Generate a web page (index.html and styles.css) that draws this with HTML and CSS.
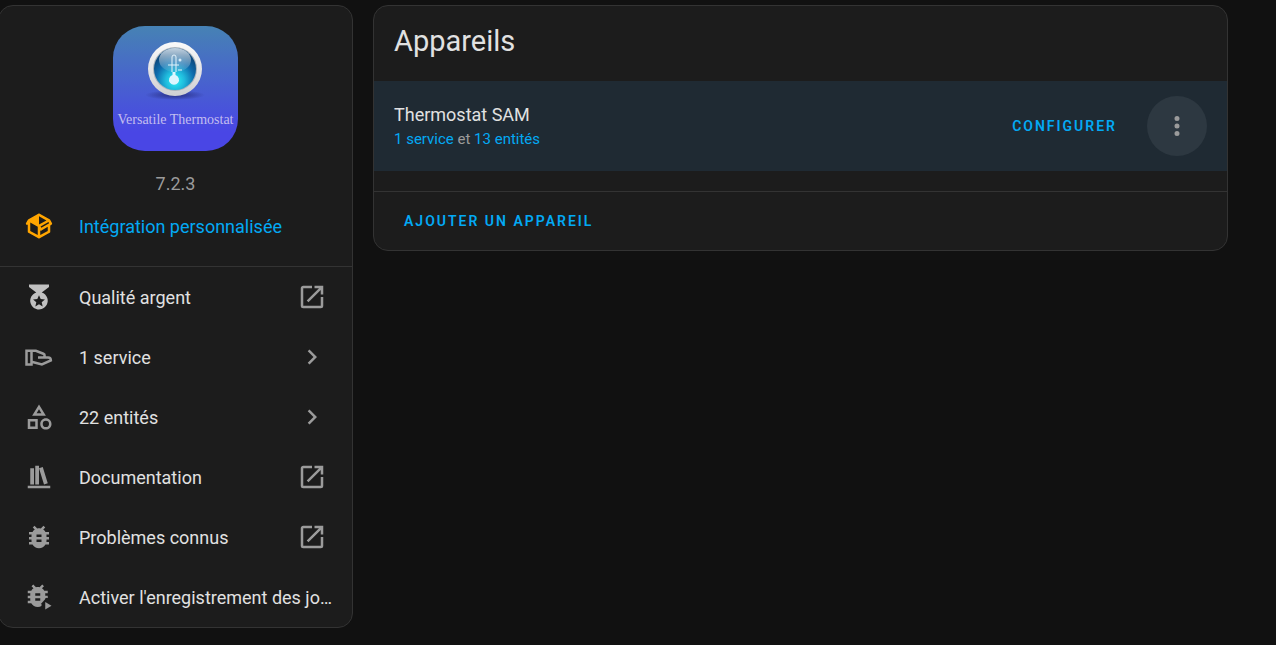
FILE: index.html
```html
<!DOCTYPE html>
<html lang="fr">
<head>
    <meta charset="UTF-8">
    <meta name="viewport" content="width=device-width, initial-scale=1.0">
    <title>Versatile Thermostat</title>
    <link rel="stylesheet" href="styles.css">
</head>
<body>
    <!-- Shared icons -->
    <svg class="sprite" aria-hidden="true">
        <symbol id="open" viewBox="0 0 24 24"><path d="M14,3V5H17.59L7.76,14.83L9.17,16.24L19,6.41V10H21V3M19,19H5V5H12V3H5C3.89,3 3,3.9 3,5V19A2,2 0 0,0 5,21H19A2,2 0 0,0 21,19V12H19V19Z"/></symbol>
        <symbol id="chevron" viewBox="0 0 24 24"><path d="M8.59,16.58L13.17,12L8.59,7.41L10,6L16,12L10,18L8.59,16.58Z"/></symbol>
        <symbol id="bug" viewBox="0 0 24 24"><path d="M14,12H10V10H14M14,16H10V14H14M20,8H17.19C16.74,7.22 16.12,6.55 15.37,6.04L17,4.41L15.59,3L13.42,5.17C12.96,5.06 12.5,5 12,5C11.5,5 11.04,5.06 10.59,5.17L8.41,3L7,4.41L8.62,6.04C7.88,6.55 7.26,7.22 6.81,8H4V10H6.09C6.04,10.33 6,10.66 6,11V12H4V14H6V15C6,15.34 6.04,15.67 6.09,16H4V18H6.81C7.85,19.79 9.78,21 12,21C14.22,21 16.15,19.79 17.19,18H20V16H17.91C17.96,15.67 18,15.34 18,15V14H20V12H18V11C18,10.66 17.96,10.33 17.91,10H20V8Z"/></symbol>
    </svg>

    <main class="page">
        <!-- Integration card -->
        <aside class="card overview">
            <div class="brand">
                <div class="logo">
                    <svg class="logo-dial" viewBox="0 0 60 60" aria-hidden="true">
                        <defs>
                            <linearGradient id="ring" x1="0" y1="0" x2="0" y2="1"><stop offset="0" stop-color="#fafafa"/><stop offset="1" stop-color="#cfcfd2"/></linearGradient>
                            <radialGradient id="glass" cx="0.5" cy="0.78" r="0.65"><stop offset="0" stop-color="#2ff3f5"/><stop offset="0.35" stop-color="#1fb9dc"/><stop offset="0.7" stop-color="#0e6cad"/><stop offset="1" stop-color="#0b4a80"/></radialGradient>
                            <linearGradient id="shine" x1="0" y1="0" x2="0" y2="1"><stop offset="0" stop-color="#fff" stop-opacity="0.75"/><stop offset="1" stop-color="#fff" stop-opacity="0.05"/></linearGradient>
                            <radialGradient id="shade"><stop offset="0" stop-color="#1b1c60" stop-opacity="0.7"/><stop offset="1" stop-color="#1b1c60" stop-opacity="0"/></radialGradient>
                        </defs>
                        <ellipse cx="29" cy="55" rx="30" ry="5" fill="url(#shade)"/>
                        <circle cx="29" cy="29" r="27" fill="url(#ring)"/>
                        <circle cx="29" cy="29" r="22" fill="#a9b4bd"/>
                        <circle cx="29" cy="29" r="21" fill="url(#glass)"/>
                        <ellipse cx="29" cy="20" rx="16" ry="12" fill="url(#shine)"/>
                        <path d="M26,32V17a2,2 0 0 1 4,0V32" fill="none" stroke="#e2f2fb" stroke-width="1"/>
                        <path d="M22,25H33M32,30H36" stroke="#e2f2fb" stroke-width="1"/>
                        <circle cx="34" cy="20" r="1.500" fill="#d5eaf6"/>
                        <path d="M26.500,32h3v3a5,5 0 1 1 -3,0z" fill="#ddf6ff"/>
                    </svg>
                    <span class="logo-name">Versatile Thermostat</span>
                </div>
                <p class="version">7.2.3</p>
            </div>
            <a class="row custom" href="#">
                <svg class="icon" viewBox="0 0 24 24"><path d="M2,10.96C1.5,10.68 1.35,10.07 1.63,9.59L3.13,7C3.24,6.8 3.41,6.66 3.6,6.58L11.43,2.18C11.59,2.06 11.79,2 12,2C12.21,2 12.41,2.06 12.57,2.18L20.47,6.62C20.66,6.72 20.82,6.88 20.91,7.08L22.36,9.6C22.64,10.08 22.47,10.69 22,10.96L21,11.54V16.5C21,16.88 20.79,17.21 20.47,17.38L12.57,21.82C12.41,21.94 12.21,22 12,22C11.79,22 11.59,21.94 11.43,21.82L3.53,17.38C3.21,17.21 3,16.88 3,16.5V10.96C2.7,11.13 2.32,11.14 2,10.96M12,4.15V4.15L12,10.85V10.85L17.96,7.5L12,4.15M5,15.91L11,19.29V12.58L5,9.21V15.91M19,15.91V12.69L14,15.59C13.67,15.77 13.3,15.76 13,15.6V19.29L19,15.91M13.85,13.36L20.13,9.73L19.55,8.72L13.27,12.35L13.85,13.36Z"/></svg>
                <span class="label">Intégration personnalisée</span>
            </a>
            <nav class="links">
                <a class="row" href="#">
                    <svg class="icon silver" viewBox="0 0 24 24"><path d="M20,2H4V4L9.81,8.36C6.14,9.57 4.14,13.53 5.35,17.2C6.56,20.87 10.5,22.87 14.19,21.66C17.86,20.45 19.86,16.5 18.65,12.82C17.95,10.71 16.3,9.05 14.19,8.36L20,4V2M14.94,19.5L12,17.78L9.06,19.5L9.84,16.17L7.25,13.93L10.66,13.64L12,10.5L13.34,13.64L16.75,13.93L14.16,16.17L14.94,19.5Z"/></svg>
                    <span class="label">Qualité argent</span>
                    <svg class="icon"><use href="#open"/></svg>
                </a>
                <a class="row" href="#">
                    <svg class="icon outline" viewBox="0 0 24 24"><path d="M2,7H6V18H2ZM6,7H9.500L15.500,9.400C17,10.100 16.800,12.300 15.200,12.300H11.200M15.500,12.300H19.300C20.700,12.300 21.500,13.300 21.500,14.800L14.300,18L6,15.800"/></svg>
                    <span class="label">1 service</span>
                    <svg class="icon"><use href="#chevron"/></svg>
                </a>
                <a class="row" href="#">
                    <svg class="icon" viewBox="0 0 24 24"><path d="M11,13.5V21.5H3V13.5H11M9,15.5H5V19.5H9V15.5M12,2L17.5,11H6.5L12,2M12,5.86L10.08,9H13.92L12,5.86M17.5,13C20,13 22,15 22,17.5C22,20 20,22 17.5,22C15,22 13,20 13,17.5C13,15 15,13 17.5,13M17.5,15A2.5,2.5 0 0,0 15,17.5A2.5,2.5 0 0,0 17.5,20A2.5,2.5 0 0,0 20,17.5A2.5,2.5 0 0,0 17.5,15Z"/></svg>
                    <span class="label">22 entités</span>
                    <svg class="icon"><use href="#chevron"/></svg>
                </a>
                <a class="row" href="#">
                    <svg class="icon" viewBox="0 0 24 24"><path d="M9 3V18H12V3H9M12 5L16 18L19 17L15 4L12 5M5 5V18H8V5H5M3 19V21H21V19H3Z"/></svg>
                    <span class="label">Documentation</span>
                    <svg class="icon"><use href="#open"/></svg>
                </a>
                <a class="row" href="#">
                    <svg class="icon"><use href="#bug"/></svg>
                    <span class="label">Problèmes connus</span>
                    <svg class="icon"><use href="#open"/></svg>
                </a>
                <button class="row" type="button">
                    <svg class="icon" viewBox="0 0 24 24"><use href="#bug" x="-1" y="-1" width="24" height="24"/><path class="cut" d="M14,24V17L18,12.500L24,15V24Z"/><path d="M17,16V22L22,19Z"/></svg>
                    <span class="label">Activer l'enregistrement des jo…</span>
                </button>
            </nav>
        </aside>

        <!-- Devices card -->
        <section class="card devices">
            <h1 class="title">Appareils</h1>
            <div class="device">
                <div class="device-text">
                    <h2 class="device-name">Thermostat SAM</h2>
                    <p class="device-info"><a href="#">1 service</a> et <a href="#">13 entités</a></p>
                </div>
                <button class="text-btn" type="button">Configurer</button>
                <button class="menu-btn" type="button" aria-label="Menu">
                    <svg class="icon" viewBox="0 0 24 24"><path d="M12,16A2,2 0 0,1 14,18A2,2 0 0,1 12,20A2,2 0 0,1 10,18A2,2 0 0,1 12,16M12,10A2,2 0 0,1 14,12A2,2 0 0,1 12,14A2,2 0 0,1 10,12A2,2 0 0,1 12,10M12,4A2,2 0 0,1 14,6A2,2 0 0,1 12,8A2,2 0 0,1 10,6A2,2 0 0,1 12,4Z"/></svg>
                </button>
            </div>
            <div class="actions">
                <button class="text-btn" type="button">Ajouter un appareil</button>
            </div>
        </section>
    </main>
</body>
</html>
```
FILE: styles.css
```css
* { box-sizing: border-box; margin: 0; padding: 0; }
body { background: #111111; color: #e1e1e1; font-family: Roboto, sans-serif; font-size: 18px; line-height: 25px; }
a { color: #03a9f4; text-decoration: none; }
button { font: inherit; color: inherit; background: none; border: none; cursor: pointer; }

.sprite { display: none; }

.page { display: flex; align-items: flex-start; gap: 20px; padding: 5px 48px 16px 0; }

.card { background: #1c1c1c; border: 1px solid #333333; border-radius: 15px; overflow: hidden; }

/* Integration card */
.overview { flex: 0 0 355px; margin-left: -2px; }
.brand { display: flex; flex-direction: column; align-items: center; gap: 20px; padding-top: 20px; }
.logo {
    display: flex; flex-direction: column; align-items: center; gap: 10px;
    width: 125px; height: 125px; padding-top: 14px; border-radius: 32px;
    background: linear-gradient(#4682b4, #4946e5 85%);
}
.logo-dial { width: 60px; height: 60px; }
.logo-name { font-family: "Liberation Serif", serif; font-size: 14px; line-height: 20px; color: #c3bdf0; white-space: nowrap; }
.version { color: #9b9b9b; }

/* Rows */
.row { display: flex; align-items: center; gap: 25px; width: 100%; height: 60px; padding: 0 25px; color: #e1e1e1; text-align: left; }
.label { flex: 1; min-width: 0; white-space: nowrap; }
.links { border-top: 1px solid #333333; }
.custom { color: #03a9f4; margin-bottom: 10px; }
.icon { flex: none; width: 30px; height: 30px; fill: #9b9b9b; }
.custom .icon { fill: #ffa500; }
.silver { fill: #c0c0c0; }
.outline { fill: none; stroke: #9b9b9b; stroke-width: 2; }
.cut { fill: #1c1c1c; }

/* Devices card */
.devices { flex: 1; min-width: 0; }
.title { padding: 15px 20px 20px; font-size: 29px; font-weight: 400; line-height: 40px; }
.device { display: flex; align-items: center; gap: 20px; height: 90px; padding: 0 20px; background: #1f2a33; margin-bottom: 20px; }
.device-text { flex: 1; min-width: 0; padding-top: 2px; }
.device-name { font-size: 18px; font-weight: 400; line-height: 24px; }
.device-info { font-size: 15px; line-height: 24px; color: #9b9b9b; }
.text-btn { height: 45px; padding: 0 10px; color: #03a9f4; font-size: 14px; font-weight: 600; letter-spacing: 2px; text-transform: uppercase; }
.menu-btn { display: flex; align-items: center; justify-content: center; width: 60px; height: 60px; border-radius: 50%; background: #2d3841; }
.actions { padding: 7px 20px 6px; border-top: 1px solid #333333; }
```
